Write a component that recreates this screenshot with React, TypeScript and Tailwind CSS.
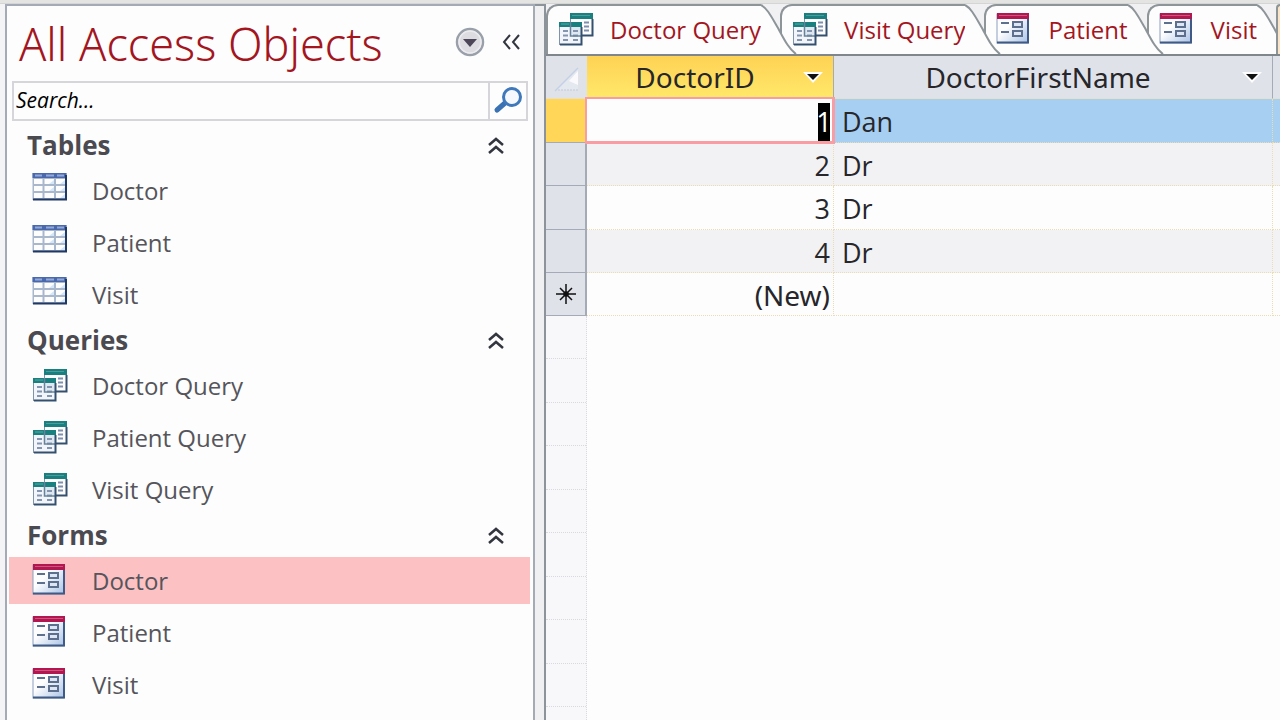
import React, { useState } from 'react';

type Kind = 'table' | 'query' | 'form';

function TableIcon() {
  return (
    <svg width="36" height="38" viewBox="0 0 36 38" className="shrink-0" aria-hidden="true">
      <rect x="0.5" y="1" width="34" height="27" fill="#a9b7cd" />
      <rect x="0.5" y="1" width="34" height="5" fill="#4a69ad" />
      <path d="M3 3.500h7M14 3.500h8M25 3.500h7" stroke="#93a9d8" strokeWidth="2" />
      <g fill="#fdfdfd">
        <rect x="2" y="7" width="8.500" height="5" />
        <rect x="12.500" y="7" width="9.500" height="5" />
        <rect x="24" y="7" width="9" height="5" />
        <rect x="2" y="14" width="8.500" height="5" />
        <rect x="12.500" y="14" width="9.500" height="5" />
        <rect x="24" y="14" width="9" height="5" />
        <rect x="2" y="21" width="8.500" height="5" />
        <rect x="12.500" y="21" width="9.500" height="5" />
        <rect x="24" y="21" width="9" height="5" />
      </g>
      <path d="M17 12l5-4v4zM28 12l5-4v4zM17 19l5-4v4zM28 19l5-4v4zM28 26l5-4v4z" fill="#d3e6fa" />
      <path d="M1 27.500H34V3" fill="none" stroke="#1f3864" strokeWidth="2" />
    </svg>
  );
}

function QueryIcon() {
  return (
    <svg width="36" height="36" viewBox="0 0 36 36" className="shrink-0" aria-hidden="true">
      <rect x="12.500" y="1.500" width="22" height="22" fill="#fdfdfd" stroke="#7f93ad" />
      <rect x="12" y="1" width="23" height="6" fill="#19807f" />
      <path d="M14 3.500h18" stroke="#4b9c9b" strokeWidth="1" />
      <path d="M26 10.500h5M26 14.500h5M26 18.500h5" stroke="#7f90ae" strokeWidth="2" />
      <path d="M13 23.500H34.500V7" fill="none" stroke="#34506f" strokeWidth="2" />
      <rect x="1.500" y="10.500" width="22" height="22" fill="#f2f5fa" stroke="#7f93ad" />
      <rect x="1" y="10" width="23" height="5" fill="#19807f" />
      <path d="M3 12h8" stroke="#5ba8a5" />
      <rect x="13" y="15" width="10" height="8" fill="#dfe8f0" />
      <path d="M5 19h5M15 19h5M5 23.500h5M15 23.500h5M5 28h5M15 28h5" stroke="#8495b2" strokeWidth="2" />
      <path d="M12.500 10V24H23" fill="none" stroke="#67829a" strokeWidth="1.500" />
      <path d="M2 32.500H23.500V15" fill="none" stroke="#34506f" strokeWidth="2" />
    </svg>
  );
}

function FormIcon() {
  return (
    <svg width="36" height="36" viewBox="0 0 36 36" className="shrink-0" aria-hidden="true">
      <defs>
        <linearGradient id="formFace" x1="0" y1="0" x2="1" y2="1">
          <stop offset="0.4" stopColor="#fdfdfd" />
          <stop offset="1" stopColor="#a9c3e6" />
        </linearGradient>
      </defs>
      <rect x="1" y="2" width="31" height="29" fill="url(#formFace)" stroke="#8c9fc0" />
      <rect x="1" y="1" width="32" height="6" fill="#b3174f" />
      <path d="M3 3.500h28" stroke="#cc5580" />
      <path d="M5 11h8M5 20h8" stroke="#5d7090" strokeWidth="2" />
      <rect x="17" y="10" width="9" height="5" fill="#dde6f2" stroke="#5d6f8e" strokeWidth="2" />
      <rect x="17" y="19" width="9" height="5" fill="#dde6f2" stroke="#5d6f8e" strokeWidth="2" />
      <path d="M1 30.500H32V7" fill="none" stroke="#3f5a86" strokeWidth="2" />
    </svg>
  );
}

function ObjectIcon({ kind }: { kind: Kind }) {
  if (kind === 'table') return <TableIcon />;
  if (kind === 'query') return <QueryIcon />;
  return <FormIcon />;
}

const groups: { title: string; kind: Kind; items: string[] }[] = [
  { title: 'Tables', kind: 'table', items: ['Doctor', 'Patient', 'Visit'] },
  { title: 'Queries', kind: 'query', items: ['Doctor Query', 'Patient Query', 'Visit Query'] },
  { title: 'Forms', kind: 'form', items: ['Doctor', 'Patient', 'Visit'] },
];

const tabs: { label: string; kind: Kind; stack: string }[] = [
  { label: 'Doctor Query', kind: 'query', stack: 'z-40' },
  { label: 'Visit Query', kind: 'query', stack: 'z-30 -ml-[17px]' },
  { label: 'Patient', kind: 'form', stack: 'z-20 -ml-[17px]' },
  { label: 'Visit', kind: 'form', stack: 'z-10 -ml-[17px]' },
];

const rows = [
  { id: 1, name: 'Dan' },
  { id: 2, name: 'Dr' },
  { id: 3, name: 'Dr' },
  { id: 4, name: 'Dr' },
];

function NavigationPane() {
  const [selected, setSelected] = useState('Forms/Doctor');
  return (
    <aside className="flex w-[530px] shrink-0 flex-col overflow-hidden border-2 border-b-0 border-[#a5abb6] bg-[#fdfdfd]">
      <header className="flex h-[75px] shrink-0 items-center pl-3 pr-2">
        <h1 className="grow whitespace-nowrap font-['Noto_Sans','Open_Sans',sans-serif] text-[45px] font-light leading-[75px] text-[#a4161f]">
          All Access Objects
        </h1>
        <button type="button" aria-label="Choose category" className="mb-1 mr-4">
          <svg width="30" height="30" viewBox="0 0 30 30">
            <circle cx="15" cy="15" r="13" fill="#dcdce1" stroke="#9aa0aa" strokeWidth="2.500" />
            <circle cx="15" cy="15" r="11" fill="none" stroke="#ececef" strokeWidth="1.500" />
            <path d="M8 12h14l-7 8z" fill="#4c4658" />
          </svg>
        </button>
        <button type="button" aria-label="Collapse pane" className="mb-1 mr-1">
          <svg width="20" height="18" viewBox="0 0 20 18" fill="none" stroke="#33363f" strokeWidth="2">
            <path d="M9 2L3 9l6 7M18 2l-6 7 6 7" />
          </svg>
        </button>
      </header>
      <form className="ml-[5px] mr-[5px] flex h-10 shrink-0 border-2 border-[#d6d6da]" onSubmit={(e) => e.preventDefault()}>
        <input
          type="text"
          aria-label="Search"
          placeholder="Search..."
          className="min-w-0 grow bg-transparent pl-0.5 text-[21px] italic outline-none placeholder:text-black"
        />
        <button type="submit" aria-label="Search" className="flex w-[38px] items-center justify-center border-l-2 border-[#d6d6da]">
          <svg width="30" height="28" viewBox="0 0 30 28" fill="none">
            <path d="M12 16L4 23" stroke="#3a72b4" strokeWidth="5" strokeLinecap="round" />
            <circle cx="19" cy="10" r="8.500" fill="#f5f8fc" stroke="#3f79bb" strokeWidth="3" />
          </svg>
        </button>
      </form>
      <nav className="flex flex-col pt-1">
        {groups.map((g) => (
          <section key={g.title}>
            <h2>
              <button type="button" className="flex h-[39px] w-full items-center justify-between pl-5 pr-7 text-[26px] font-bold leading-none text-[#4a4a50]">
                {g.title}
                <svg width="18" height="20" viewBox="0 0 18 20" fill="none" stroke="#33363f" strokeWidth="2.500">
                  <path d="M2 10l7-6 7 6M2 18l7-6 7 6" />
                </svg>
              </button>
            </h2>
            <ul>
              {g.items.map((item) => {
                const key = g.title + '/' + item;
                return (
                  <li key={key} className="pb-0.5 pl-0.5 pr-[3px] pt-[3px]">
                    <button
                      type="button"
                      onClick={() => setSelected(key)}
                      className={
                        'flex h-[47px] w-full items-center gap-6 pl-[23px] text-2xl text-[#55555b] ' + (selected === key ? 'bg-[#fbc1c3]' : '')
                      }
                    >
                      <ObjectIcon kind={g.kind} />
                      {item}
                    </button>
                  </li>
                );
              })}
            </ul>
          </section>
        ))}
      </nav>
    </aside>
  );
}

function TabStrip() {
  return (
    <div role="tablist" className="flex h-[52px] shrink-0 overflow-hidden border-b-2 border-[#7f878d] bg-[#f1f1f4]">
      {tabs.map((t) => (
        <button key={t.label} type="button" role="tab" className={'relative flex shrink-0 ' + t.stack}>
          <span className="flex h-full items-center gap-4 whitespace-nowrap rounded-tl-xl border-l-2 border-t-2 border-[#8d9599] bg-[#fdfdfd] pl-2.5 text-2xl text-[#a4161f]">
            <ObjectIcon kind={t.kind} />
            {t.label}
          </span>
          <svg width="36" height="50" viewBox="0 0 36 50" aria-hidden="true">
            <path d="M0 1C6 4 10 12 17 24C24 37 28 45 35 50H0z" fill="#fdfdfd" />
            <path d="M0 1C6 4 10 12 17 24C24 37 28 45 35 50" fill="none" stroke="#8d9599" strokeWidth="2" />
          </svg>
        </button>
      ))}
      <button
        type="button"
        role="tab"
        aria-selected="true"
        aria-label="Doctor"
        className="relative z-50 -ml-[17px] h-full grow rounded-tl-xl border-l-2 border-t-2 border-[#8d9599] bg-[#fbe3c6]"
      />
    </div>
  );
}

function HeaderCell({ label, className }: { label: string; className: string }) {
  return (
    <th scope="col" className={'border-b border-r border-b-[#e9dfc4] border-r-[#a5abb6] p-0 font-normal ' + className}>
      <div className="flex h-full items-center pr-2.5">
        <span className="grow text-center font-['Noto_Sans','Open_Sans',sans-serif] text-[28px] leading-none">{label}</span>
        <button type="button" aria-label={'Filter ' + label}>
          <svg width="20" height="12" viewBox="0 0 20 12">
            <path d="M0 1h20L10 12z" fill="#fdfdfd" />
            <path d="M4 3h12l-6 6z" fill="#111" />
          </svg>
        </button>
      </div>
    </th>
  );
}

function Datasheet() {
  return (
    <table className="w-full table-fixed border-separate border-spacing-0 text-[27px] leading-none text-[#26262b]">
      <colgroup>
        <col className="w-[41px]" />
        <col className="w-[247px]" />
        <col className="w-[439px]" />
        <col />
      </colgroup>
      <thead>
        <tr className="h-[43px] bg-[#dfe2e9]">
          <td className="border-b border-[#e9dfc4] p-0">
            <svg width="40" height="40" viewBox="0 0 40 40" aria-hidden="true">
              <path d="M9 33L32 11V33z" fill="#e4e8ef" />
              <path d="M9 34L32 11" stroke="#c3d0e6" strokeWidth="1.500" />
              <path d="M32 14v14l-9-4z" fill="#fafafc" />
              <path d="M12 33h20" stroke="#c3cad8" strokeDasharray="2 1" />
            </svg>
          </td>
          <HeaderCell label="DoctorID" className="bg-linear-to-b from-[#fed254] to-[#ffe869]" />
          <HeaderCell label="DoctorFirstName" className="" />
          <td className="border-b border-[#e9dfc4] p-0" />
        </tr>
      </thead>
      <tbody>
        {rows.map((r, i) => {
          const active = i === 0;
          const band = active ? 'bg-[#a6cff2]' : i % 2 ? 'bg-[#f2f2f4]' : 'bg-[#fdfdfd]';
          return (
            <tr key={r.id} className="h-11 even:h-[43px]">
              <th
                scope="row"
                aria-label={'Record ' + r.id}
                className={'border-b border-r-2 border-[#a5abb6] p-0 ' + (active ? 'bg-[#ffd658]' : 'bg-[#dfe2e9]')}
              />
              <td
                className={
                  'border-b border-r border-dotted border-[#ecdcb4] p-0 pr-[3px] pt-0.5 text-right ' + (active ? 'relative z-10 bg-[#fdfdfd]' : band)
                }
              >
                {active ? <span className="inline-flex h-[38px] w-3 items-center justify-center bg-black align-middle text-white">1</span> : r.id}
                {active && (
                  <span className="pointer-events-none absolute -bottom-0.5 -left-0.5 -right-0.5 -top-0.5 border-2 border-b-[3px] border-r-[3px] border-[#fa9da2]" />
                )}
              </td>
              <td className={'border-b border-r border-dotted border-[#ecdcb4] p-0 pl-2 pt-0.5 ' + band}>{r.name}</td>
              <td className={'border-b border-dotted border-[#ecdcb4] p-0 ' + band} />
            </tr>
          );
        })}
        <tr className="h-[43px]">
          <th scope="row" aria-label="New record" className="border-b border-r-2 border-[#a5abb6] bg-[#dfe2e9] p-0">
            <svg width="20" height="20" viewBox="0 0 20 20" className="mx-auto" stroke="#111" strokeWidth="1.500">
              <path d="M10 0v20M0 10h20M4 4l12 12M16 4L4 16" />
              <circle cx="10" cy="10" r="2" fill="#111" />
            </svg>
          </th>
          <td className="border-b border-r border-dotted border-[#ecdcb4] p-0 pr-[3px] pt-0.5 text-right font-['Noto_Sans','Open_Sans',sans-serif] text-[28px]">
            (New)
          </td>
          <td className="border-b border-r border-dotted border-[#ecdcb4]" />
          <td className="border-b border-dotted border-[#ecdcb4]" />
        </tr>
      </tbody>
    </table>
  );
}

export default function App() {
  return (
    <div className="flex h-screen flex-col overflow-hidden bg-[#fdfdfd] font-['Open_Sans','Noto_Sans',sans-serif]">
      <div className="h-1 shrink-0 border-b border-[#d5d5d5] bg-[#e4e4e2]" />
      <div className="flex min-h-0 grow bg-[#f4f4f7] pl-[5px]">
        <NavigationPane />
        <div className="w-[11px] shrink-0 border-r-2 border-t-2 border-[#8d939b] bg-[#f0f0f3]" />
        <main className="flex min-w-0 grow flex-col bg-[#fdfdfd]">
          <TabStrip />
          <Datasheet />
          <div className="min-h-0 w-[41px] grow overflow-hidden border-r border-dotted border-[#d9d9e0] bg-[#f8f8fa]" aria-hidden="true">
            {Array.from({ length: 10 }, (_, i) => (
              <div key={i} className="h-[43px] border-b border-dotted border-[#d9d9e0] even:h-11" />
            ))}
          </div>
        </main>
      </div>
    </div>
  );
}
